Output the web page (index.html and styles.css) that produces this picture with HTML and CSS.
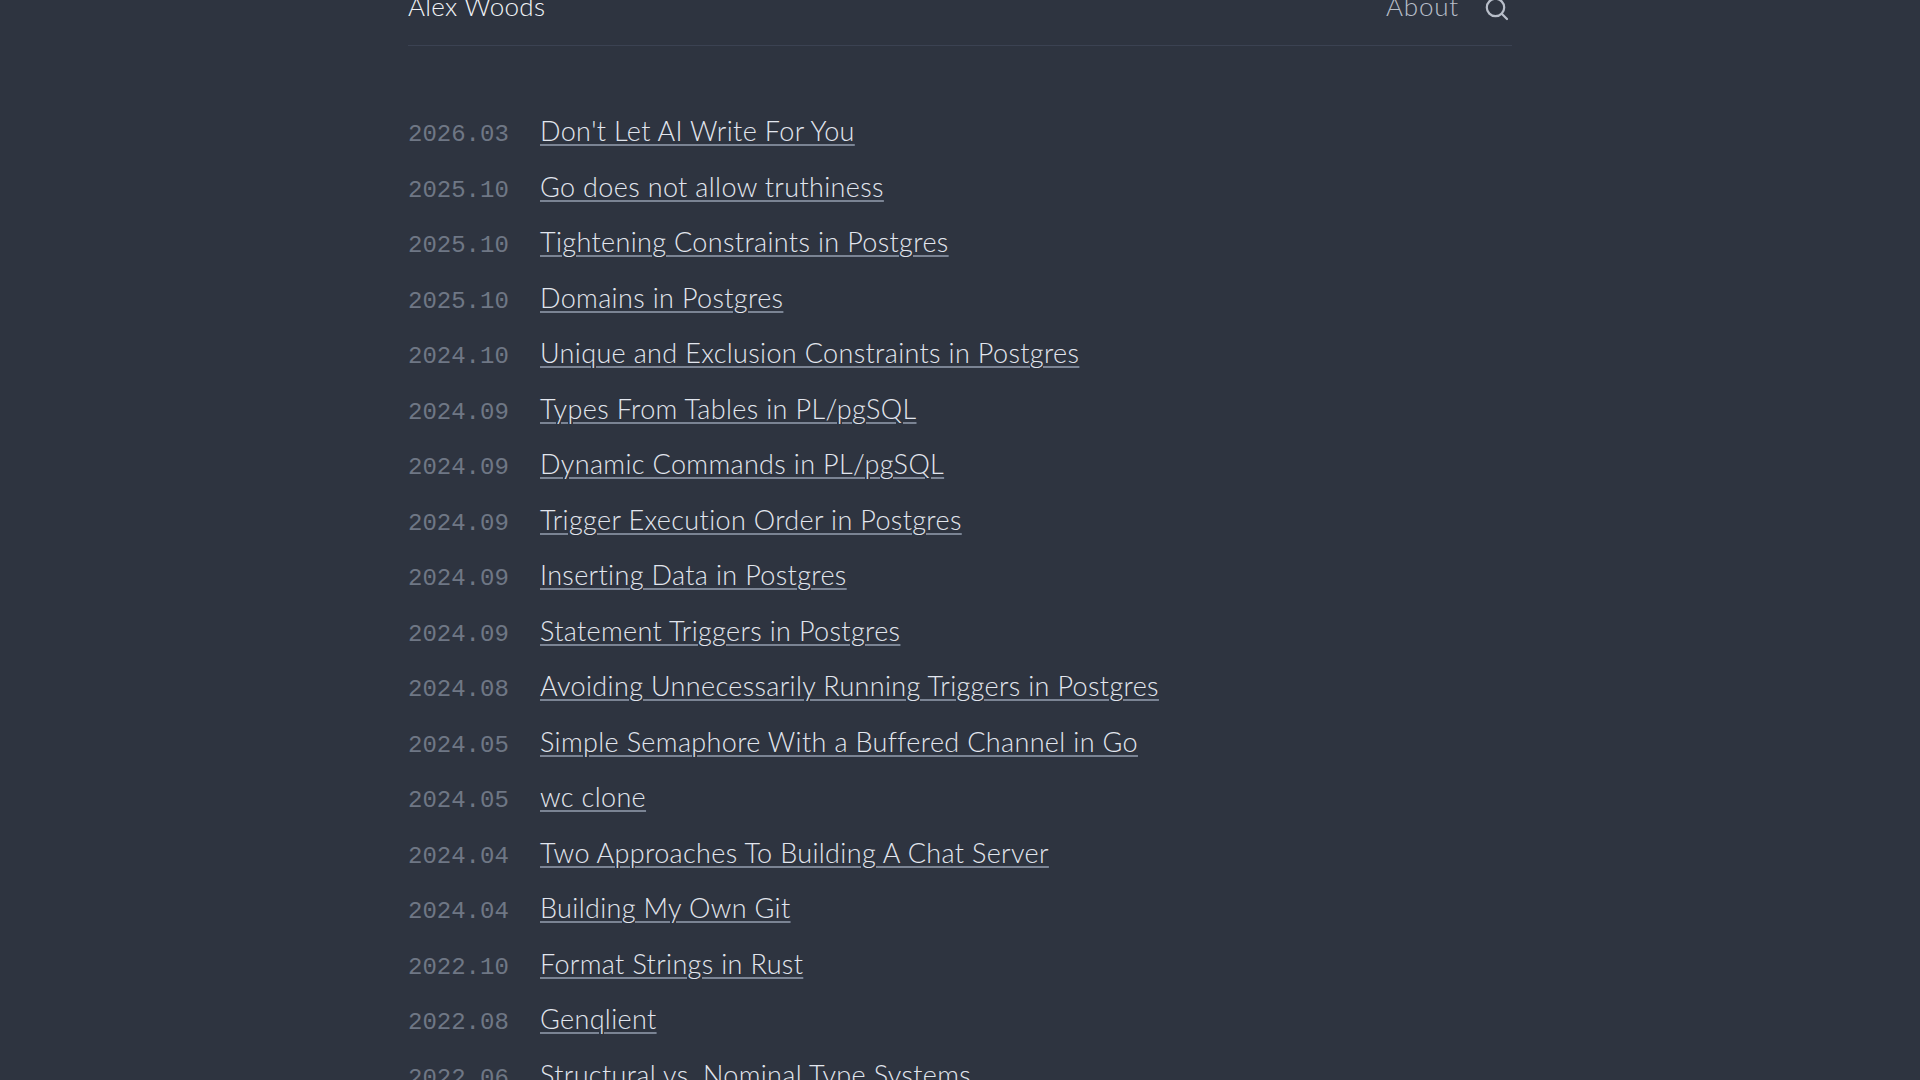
FILE: index.html
```html
<!DOCTYPE html>
<html lang="en">
<head>
  <meta charset="UTF-8" />
  <meta name="viewport" content="width=device-width, initial-scale=1.0" />
  <title>Alex Woods</title>
  <link rel="stylesheet" href="styles.css">
</head>
<body>
  <div class="page">
    <header class="site-header">
      <a class="site-name" href="#">Alex Woods</a>
      <nav class="site-nav">
        <a href="#">About</a>
        <svg class="search-icon" viewBox="0 0 24 24" width="24" height="24" fill="none" stroke="currentColor" stroke-width="2.2" stroke-linecap="round">
          <circle cx="10.5" cy="10.5" r="8.7"></circle>
          <path d="M17 17l5 5"></path>
        </svg>
      </nav>
    </header>

    <ul class="post-list">
      <li><span class="post-date">2026.03</span><a href="#">Don't Let AI Write For You</a></li>
      <li><span class="post-date">2025.10</span><a href="#">Go does not allow truthiness</a></li>
      <li><span class="post-date">2025.10</span><a href="#">Tightening Constraints in Postgres</a></li>
      <li><span class="post-date">2025.10</span><a href="#">Domains in Postgres</a></li>
      <li><span class="post-date">2024.10</span><a href="#">Unique and Exclusion Constraints in Postgres</a></li>
      <li><span class="post-date">2024.09</span><a href="#">Types From Tables in PL/pgSQL</a></li>
      <li><span class="post-date">2024.09</span><a href="#">Dynamic Commands in PL/pgSQL</a></li>
      <li><span class="post-date">2024.09</span><a href="#">Trigger Execution Order in Postgres</a></li>
      <li><span class="post-date">2024.09</span><a href="#">Inserting Data in Postgres</a></li>
      <li><span class="post-date">2024.09</span><a href="#">Statement Triggers in Postgres</a></li>
      <li><span class="post-date">2024.08</span><a href="#">Avoiding Unnecessarily Running Triggers in Postgres</a></li>
      <li><span class="post-date">2024.05</span><a href="#">Simple Semaphore With a Buffered Channel in Go</a></li>
      <li><span class="post-date">2024.05</span><a href="#">wc clone</a></li>
      <li><span class="post-date">2024.04</span><a href="#">Two Approaches To Building A Chat Server</a></li>
      <li><span class="post-date">2024.04</span><a href="#">Building My Own Git</a></li>
      <li><span class="post-date">2022.10</span><a href="#">Format Strings in Rust</a></li>
      <li><span class="post-date">2022.08</span><a href="#">Genqlient</a></li>
      <li><span class="post-date">2022.06</span><a href="#">Structural vs. Nominal Type Systems</a></li>
    </ul>
  </div>
</body>
</html>
```

FILE: styles.css
```css
html, body {
  height: 100%;
}

body {
  margin: 0;
  overflow: hidden;
  background-color: #2e3440;
  color: #e2e6ee;
  font-family: 'Lato', 'Open Sans', sans-serif;
  font-variant-ligatures: none;
}

a {
  color: inherit;
}

.page {
  width: 1104px;
  margin: -21px auto 0;
}

.site-header {
  display: flex;
  align-items: center;
  justify-content: space-between;
  height: 54px;
  padding-bottom: 12px;
  border-bottom: 1px solid #3b4252;
  font-size: 26px;
  letter-spacing: 0.3px;
  font-weight: 300;
}

.site-name {
  color: #f0f3f7;
  text-decoration: none;
}

.site-nav {
  display: flex;
  align-items: center;
  gap: 26px;
  color: #b8bec9;
}

.site-nav a {
  text-decoration: none;
  letter-spacing: 0.8px;
}

/* icon sits a bit lower than the About text */
.search-icon {
  margin-top: 5px;
  margin-right: 3px;
}

.post-list {
  list-style: none;
  margin: 57px 0 0;
  padding: 0;
}

.post-list li {
  display: flex;
  align-items: baseline;
  height: 55.5px;
  font-size: 27px;
  line-height: 55.5px;
  font-weight: 300;
  letter-spacing: 0.35px;
}

.post-date {
  width: 132px;
  flex-shrink: 0;
  font-family: 'Liberation Mono', monospace;
  font-size: 24px;
  font-weight: 400;
  letter-spacing: 0;
  color: #6f7785;
}

.post-list a {
  text-decoration-color: #7b8494;
  text-decoration-thickness: 2px;
  text-underline-offset: 3px;
}
```
